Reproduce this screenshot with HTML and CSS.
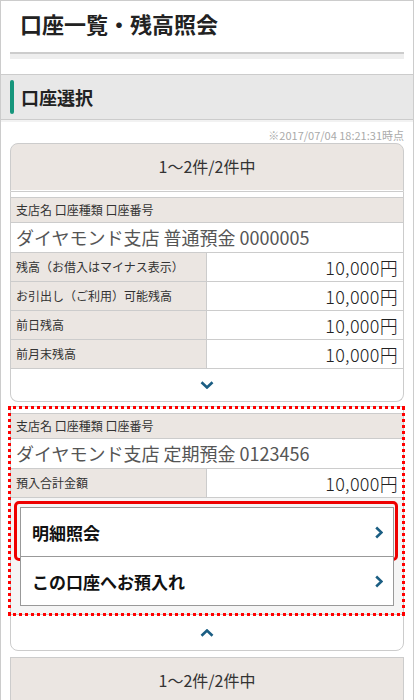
FILE: index.html
```html
<!DOCTYPE html>
<html lang="ja">
<head>
    <meta charset="UTF-8">
    <meta name="viewport" content="width=device-width, initial-scale=1.0">
    <title>口座一覧・残高照会</title>
    <link rel="stylesheet" href="styles.css">
</head>
<body>
    <div class="page">
        <div class="header">
            <h1>口座一覧・残高照会</h1>
        </div>
        <div class="title-rule"></div>

        <!-- 口座選択 -->
        <h2 class="section-title"><span class="bar"></span>口座選択</h2>
        <div class="stamp">※2017/07/04 18:21:31時点</div>

        <div class="count count-top">1～2件/2件中</div>

        <div class="card">
            <div class="acct-head">支店名 口座種類 口座番号</div>
            <div class="acct-name">ダイヤモンド支店 普通預金 0000005</div>
            <div class="acct-row">
                <div class="label">残高（お借入はマイナス表示）</div>
                <div class="value">10,000円</div>
            </div>
            <div class="acct-row">
                <div class="label">お引出し（ご利用）可能残高</div>
                <div class="value">10,000円</div>
            </div>
            <div class="acct-row">
                <div class="label">前日残高</div>
                <div class="value">10,000円</div>
            </div>
            <div class="acct-row">
                <div class="label">前月末残高</div>
                <div class="value">10,000円</div>
            </div>
            <div class="toggle">
                <svg width="14" height="8" viewBox="0 0 14 8"><polyline points="1.5,1.2 7,6.5 12.5,1.2" /></svg>
            </div>
        </div>

        <div class="card card-open">
            <div class="focus-dots"></div>
            <div class="acct-head">支店名 口座種類 口座番号</div>
            <div class="acct-name">ダイヤモンド支店 定期預金 0123456</div>
            <div class="acct-row">
                <div class="label">預入合計金額</div>
                <div class="value">10,000円</div>
            </div>
            <div class="actions">
                <a href="#" class="action">
                    明細照会
                    <svg width="8" height="13" viewBox="0 0 8 13"><polyline points="1.2,1.5 6.5,6.5 1.2,11.5" /></svg>
                    <span class="focus-box"></span>
                </a>
                <a href="#" class="action">
                    この口座へお預入れ
                    <svg width="8" height="13" viewBox="0 0 8 13"><polyline points="1.2,1.5 6.5,6.5 1.2,11.5" /></svg>
                </a>
            </div>
            <div class="toggle toggle-up">
                <svg width="14" height="8" viewBox="0 0 14 8"><polyline points="1.5,6.8 7,1.5 12.5,6.8" /></svg>
            </div>
        </div>

        <div class="count count-bottom">1～2件/2件中</div>
    </div>
</body>
</html>
```

FILE: styles.css
```css
body {
    margin: 0;
    font-family: "Noto Sans CJK JP", "Noto Sans", sans-serif;
    color: #333;
    background: #fff;
}
.page {
    border: 1px solid #ccc;
    min-height: 700px;
    box-sizing: border-box;
    overflow: hidden;
}
.header {
    padding: 6px 19px 0;
}
.header h1 {
    margin: 0;
    font-size: 22px;
    line-height: 32px;
    font-weight: bold;
    color: #222;
}
.title-rule {
    margin: 13px 9px 15px;
    height: 5px;
    border-top: 2px solid #ccc;
    background: #eee;
}
.section-title {
    display: flex;
    align-items: center;
    gap: 7px;
    margin: 0;
    height: 44px;
    padding-left: 9px;
    border-top: 1px solid #ccc;
    border-bottom: 1px solid #ccc;
    background: #e8e8e8;
    font-size: 18px;
    font-weight: bold;
    color: #222;
    box-shadow: 0 2px 0 #f2f2f2;
}
.section-title .bar {
    width: 4px;
    height: 34px;
    border-radius: 2px;
    background: #16967c;
}
.stamp {
    padding: 8px 9px 1px;
    font-family: "Noto Sans CJK JP", sans-serif;
    font-size: 11px;
    line-height: 14px;
    text-align: right;
    color: #aaa;
}
.count {
    margin: 0 9px;
    border: 1px solid #ccc;
    background: #ebe6e2;
    text-align: center;
    font-size: 16px;
    color: #333;
}
.count-top {
    height: 47px;
    line-height: 45px;
    border-radius: 8px 8px 0 0;
    box-shadow: inset 0 -1px 0 #fff;
}
.count-bottom {
    margin-top: 6px;
    height: 47px;
    line-height: 44px;
}
.card {
    position: relative;
    margin: 0 9px;
    padding-top: 5px;
    border: 1px solid #ccc;
    border-top: none;
    border-radius: 0 0 8px 8px;
    background: #fff;
}
.card-open {
    margin-top: 4px;
    padding-top: 6px;
    border-top: 1px solid #ccc;
}
.acct-head {
    height: 24px;
    padding: 0 5px;
    border-top: 1px solid #ccc;
    background: #ebe6e2;
    font-size: 12px;
    line-height: 24px;
}
.acct-name {
    height: 29px;
    padding: 0 5px;
    border-top: 1px solid #ccc;
    font-size: 18px;
    line-height: 29px;
    color: #555;
}
.acct-row {
    display: grid;
    grid-template-columns: 196px 1fr;
    height: 28px;
    border-top: 1px solid #ccc;
}
.acct-row .label {
    padding: 0 5px;
    border-right: 1px solid #ccc;
    background: #ebe6e2;
    font-size: 12px;
    line-height: 28px;
}
.acct-row .value {
    padding-right: 5px;
    text-align: right;
    font-size: 18px;
    font-weight: 300;
    letter-spacing: 0.3px;
    line-height: 28px;
    color: #222;
}
.toggle {
    display: flex;
    justify-content: center;
    align-items: center;
    height: 32px;
    border-top: 1px solid #ccc;
}
.toggle-up {
    height: 35px;
}
.toggle svg polyline,
.action svg polyline {
    fill: none;
    stroke: #1b5e83;
    stroke-width: 2.6;
}
.actions {
    padding: 9px 9px 8px;
    border-top: 1px solid #ccc;
    background: #f5f5f5;
}
.action {
    position: relative;
    display: flex;
    align-items: center;
    justify-content: space-between;
    box-sizing: border-box;
    height: 50px;
    padding: 0 10px 0 11px;
    border: 1px solid #999;
    background: #fff;
    font-size: 17px;
    font-weight: bold;
    color: #111;
    text-decoration: none;
}
.action + .action {
    margin-top: -1px;
}
/* 注目枠 */
.focus-box {
    position: absolute;
    top: -7px;
    left: -7px;
    right: -5px;
    bottom: -5px;
    border: 3px solid #e00;
    border-radius: 5px;
}
.focus-dots {
    position: absolute;
    top: -1px;
    left: -3px;
    right: -2px;
    height: 210px;
    border: 3px dotted #f00;
    box-sizing: border-box;
    pointer-events: none;
}
```
